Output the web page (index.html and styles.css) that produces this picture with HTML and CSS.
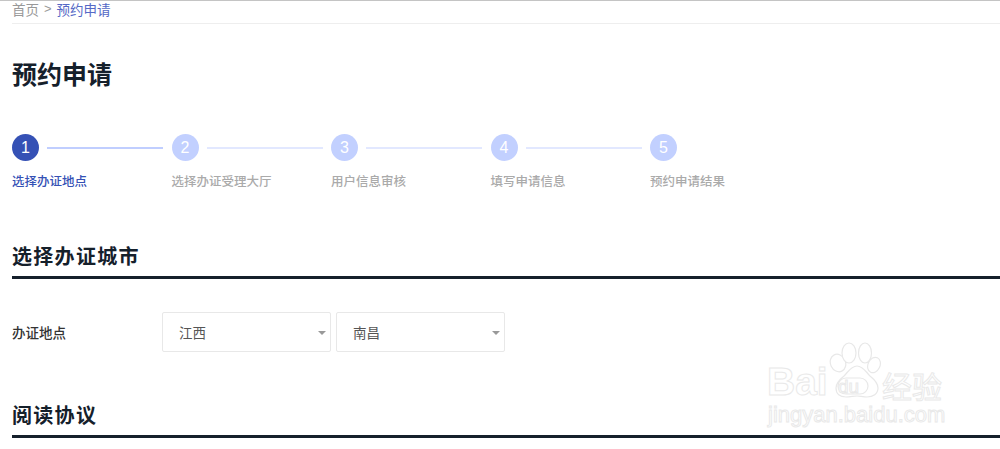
FILE: index.html
```html
<!DOCTYPE html>
<html lang="zh-CN">
<head>
<meta charset="utf-8">
<title>预约申请</title>
<link rel="stylesheet" href="styles.css">
</head>
<body>
<main class="page">
  <nav class="crumbs"><span class="crumb">首页</span><span class="sep">&gt;</span><span class="crumb-current">预约申请</span></nav>
  <h1 class="title">预约申请</h1>
  <ol class="steps">
    <li class="step step-active"><div class="track"><span class="dot">1</span><span class="line"></span></div><span class="label">选择办证地点</span></li>
    <li class="step"><div class="track"><span class="dot">2</span><span class="line"></span></div><span class="label">选择办证受理大厅</span></li>
    <li class="step"><div class="track"><span class="dot">3</span><span class="line"></span></div><span class="label">用户信息审核</span></li>
    <li class="step"><div class="track"><span class="dot">4</span><span class="line"></span></div><span class="label">填写申请信息</span></li>
    <li class="step"><div class="track"><span class="dot">5</span></div><span class="label">预约申请结果</span></li>
  </ol>
  <h2 class="section-title">选择办证城市</h2>
  <div class="field">
    <span class="field-label">办证地点</span>
    <div class="select">江西<span class="caret"></span></div>
    <div class="select">南昌<span class="caret"></span></div>
  </div>
  <h2 class="section-title section-second">阅读协议</h2>
</main>
<div class="watermark">
  <svg class="paw" viewBox="0 0 52 56" width="52" height="56">
    <g fill="#fff" stroke="#e8e8e8" stroke-width="1.2">
      <ellipse cx="9" cy="21" rx="7.5" ry="9" transform="rotate(-25 9 21)"/>
      <ellipse cx="20" cy="11" rx="7" ry="10"/>
      <ellipse cx="36" cy="11" rx="6.5" ry="10"/>
      <ellipse cx="45" cy="23" rx="6" ry="8" transform="rotate(25 45 23)"/>
      <path d="M28 24c6 0 9 6 13 10 5 4 8 7 8 12 0 6-5 9-11 9-4 0-7-1-10-1s-7 1-11 1c-6 0-10-3-10-9 0-5 3-8 8-12 4-4 7-10 13-10z"/>
      <rect x="9" y="36" width="30" height="16" rx="8" fill="none"/>
    </g>
  </svg>
  <span class="wm-bai">Bai</span><span class="wm-du">du</span><span class="wm-cn">经验</span>
  <span class="wm-url">jingyan.baidu.com</span>
</div>
</body>
</html>
```
FILE: styles.css
```css
* { box-sizing: border-box; }
html, body { margin: 0; height: 449px; overflow: hidden; background: #fff; }
body {
  border-top: 1px solid #c4c4c4;
  font-family: "Noto Sans CJK SC", "Liberation Sans", sans-serif;
  color: #15202b;
}
.page { padding-left: 12px; }
.crumbs {
  display: flex;
  align-items: center;
  gap: 5px;
  height: 23px;
  padding-bottom: 6px;
  border-bottom: 1px solid #eee;
  font-size: 13.5px;
  line-height: 16px;
  color: #999;
}
.crumb-current { color: #5569c6; }
.sep { font-family: "Liberation Sans", sans-serif; font-size: 13px; }
.title {
  margin: 31px 0 0;
  font-size: 25px;
  line-height: 36px;
  font-weight: 700;
  color: #15202b;
}
.steps {
  display: flex;
  margin: 43px 0 0;
  padding: 0;
  list-style: none;
}
.step { flex: 0 0 159.5px; }
.track { display: flex; align-items: center; gap: 8px; height: 27px; }
.dot {
  flex: none;
  width: 27px;
  height: 27px;
  border-radius: 50%;
  background: #c2d0ff;
  color: #fff;
  font: 16px/27px "Liberation Sans", sans-serif;
  text-align: center;
}
.line { width: 116px; height: 2px; background: #e2e8ff; }
.label {
  display: block;
  margin-top: 11px;
  font-size: 12.5px;
  line-height: 18px;
  font-weight: 500;
  color: #aaa;
}
.step-active .dot { background: #3551b5; }
.step-active .line { background: #c0ceff; }
.step-active .label { color: #3551b5; }
.section-title {
  margin: 0;
  margin-top: 50px;
  height: 39px;
  border-bottom: 3px solid #15202b;
  font-size: 20px;
  line-height: 31px;
  font-weight: 700;
  letter-spacing: 1.3px;
  color: #15202b;
}
.section-second { margin-top: 39px; height: 47px; padding-top: 9px; line-height: 29px; }
.field {
  display: flex;
  align-items: center;
  gap: 5px;
  margin-top: 33px;
}
.field-label {
  width: 145px;
  font-size: 13.5px;
  font-weight: 500;
  color: #333;
}
.select {
  position: relative;
  width: 169px;
  height: 40px;
  padding-left: 16px;
  border: 1px solid #e8e8e8;
  border-radius: 2px;
  font-size: 13.5px;
  line-height: 38px;
  color: #555;
}
.caret {
  position: absolute;
  right: 3px;
  top: 18px;
  width: 0;
  height: 0;
  margin-right: 1px;
  border: 4px solid transparent;
  border-top: 4px solid #999;
  border-bottom: 0;
}
.watermark {
  position: absolute;
  left: 766px;
  top: 340px;
  width: 190px;
  height: 90px;
}
.paw { position: absolute; left: 63px; top: 2px; }
.wm-bai, .wm-du, .wm-cn, .wm-url {
  position: absolute;
  color: #fff;
  -webkit-text-stroke: 1px #e9e9e9;
  font-family: "Liberation Sans", sans-serif;
  white-space: nowrap;
}
.wm-bai { left: 1px; top: 20px; font-size: 39px; line-height: 44px; font-weight: 700; }
.wm-du { left: 72px; top: 37px; font-size: 19px; line-height: 20px; }
.wm-cn { left: 116px; top: 30px; font-size: 30px; line-height: 30px; font-family: "Noto Sans CJK SC", sans-serif; }
.wm-url { left: 2px; top: 63px; font-size: 22px; line-height: 24px; }
```
